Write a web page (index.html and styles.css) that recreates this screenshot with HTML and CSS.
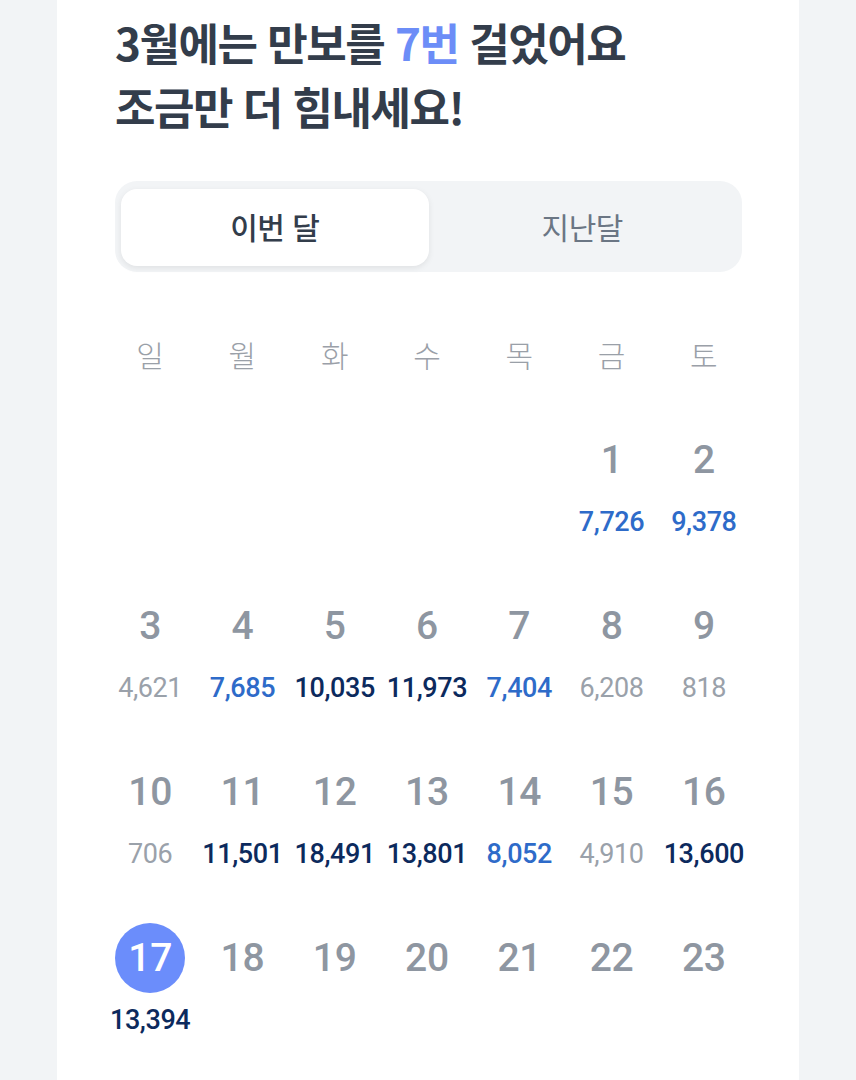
FILE: index.html
```html
<!DOCTYPE html>
<html lang="ko">
<head>
<meta charset="utf-8">
<title>만보 캘린더</title>
<link rel="stylesheet" href="styles.css">
</head>
<body>
<main class="card">
  <h1 class="title">3월에는 만보를 <span class="accent">7번</span> 걸었어요<br>조금만 더 힘내세요!</h1>

  <div class="segment">
    <button class="seg-btn active">이번 달</button>
    <button class="seg-btn">지난달</button>
  </div>

  <section class="calendar">
    <div class="weekdays">
      <span>일</span><span>월</span><span>화</span><span>수</span><span>목</span><span>금</span><span>토</span>
    </div>

    <div class="week">
      <div class="day"></div><div class="day"></div><div class="day"></div><div class="day"></div><div class="day"></div>
      <div class="day"><span class="num">1</span><span class="steps mid">7,726</span></div>
      <div class="day"><span class="num">2</span><span class="steps mid">9,378</span></div>
    </div>

    <div class="week">
      <div class="day"><span class="num">3</span><span class="steps low">4,621</span></div>
      <div class="day"><span class="num">4</span><span class="steps mid">7,685</span></div>
      <div class="day"><span class="num">5</span><span class="steps high">10,035</span></div>
      <div class="day"><span class="num">6</span><span class="steps high">11,973</span></div>
      <div class="day"><span class="num">7</span><span class="steps mid">7,404</span></div>
      <div class="day"><span class="num">8</span><span class="steps low">6,208</span></div>
      <div class="day"><span class="num">9</span><span class="steps low">818</span></div>
    </div>

    <div class="week">
      <div class="day"><span class="num">10</span><span class="steps low">706</span></div>
      <div class="day"><span class="num">11</span><span class="steps high">11,501</span></div>
      <div class="day"><span class="num">12</span><span class="steps high">18,491</span></div>
      <div class="day"><span class="num">13</span><span class="steps high">13,801</span></div>
      <div class="day"><span class="num">14</span><span class="steps mid">8,052</span></div>
      <div class="day"><span class="num">15</span><span class="steps low">4,910</span></div>
      <div class="day"><span class="num">16</span><span class="steps high">13,600</span></div>
    </div>

    <div class="week">
      <div class="day"><span class="num today">17</span><span class="steps high">13,394</span></div>
      <div class="day"><span class="num">18</span></div>
      <div class="day"><span class="num">19</span></div>
      <div class="day"><span class="num">20</span></div>
      <div class="day"><span class="num">21</span></div>
      <div class="day"><span class="num">22</span></div>
      <div class="day"><span class="num">23</span></div>
    </div>
  </section>
</main>
</body>
</html>
```

FILE: styles.css
```css
* { box-sizing: border-box; }

html, body {
  margin: 0;
  padding: 0;
  background: #f2f4f6;
  height: 100%;
  overflow: hidden;
}

body {
  font-family: "Noto Sans CJK KR", "Noto Sans", sans-serif;
  color: #333d4b;
}

.card {
  margin-left: 57px;
  width: 742px;
  min-height: 1080px;
  background: #ffffff;
  padding: 10px 57px 0 58px;
}

.title {
  margin: 0;
  font-size: 44px;
  font-weight: 700;
  line-height: 64px;
  letter-spacing: -1.5px;
  color: #333d4b;
}

.accent { color: #6c8df7; }

.segment {
  margin-top: 43px;
  display: grid;
  grid-template-columns: 1fr 1fr;
  gap: 0;
  padding: 8px 6px 6px 6px;
  background: #f2f4f6;
  border-radius: 22px;
  height: 91px;
}

.seg-btn {
  border: 0;
  background: transparent;
  font-family: "Noto Sans CJK KR", sans-serif;
  font-size: 30px;
  font-weight: 400;
  color: #6b7684;
  border-radius: 16px;
  letter-spacing: -0.5px;
  padding: 0 0 3px 0;
}

.seg-btn.active {
  background: #ffffff;
  color: #333d4b;
  font-weight: 500;
  box-shadow: 0 2px 6px rgba(0, 0, 0, 0.08);
}

.calendar {
  width: 646px;
  margin-left: -11px;
  margin-top: 60px;
}

.weekdays {
  display: grid;
  grid-template-columns: repeat(7, 1fr);
  height: 40px;
  align-items: center;
  text-align: center;
  font-size: 30px;
  font-weight: 300;
  color: #9aa0a8;
  margin-bottom: 53px;
}

.week {
  display: grid;
  grid-template-columns: repeat(7, 1fr);
  height: 166px;
}

.day {
  display: flex;
  flex-direction: column;
  align-items: center;
}

.num {
  width: 70px;
  height: 70px;
  display: flex;
  align-items: center;
  justify-content: center;
  font-family: Roboto, "Liberation Sans", sans-serif;
  font-weight: 500;
  font-size: 39px;
  color: #8e96a1;
  letter-spacing: -0.3px;
}

.num.today {
  background: #6b8dfb;
  color: #ffffff;
  border-radius: 50%;
}

.steps {
  margin-top: 12px;
  height: 30px;
  line-height: 30px;
  font-family: Roboto, "Liberation Sans", sans-serif;
  font-size: 27px;
  letter-spacing: -0.4px;
  white-space: nowrap;
}

.steps.low { color: #9aa1aa; font-weight: 400; }
.steps.mid { color: #2e6bc9; font-weight: 500; }
.steps.high { color: #0c2a5d; font-weight: 500; }
```
